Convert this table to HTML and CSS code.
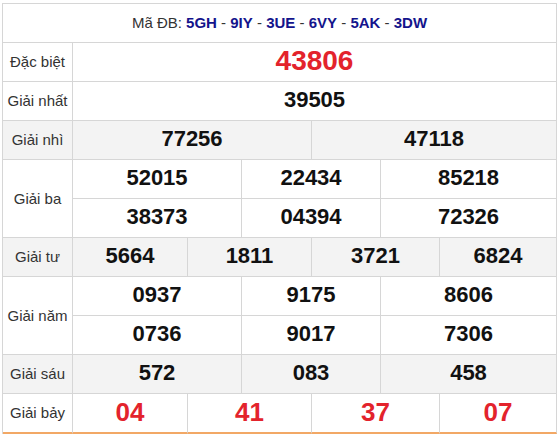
FILE: index.html
```html
<!DOCTYPE html>
<html lang="vi">
<head>
<meta charset="utf-8">
<title>Kết quả xổ số</title>
<link rel="stylesheet" href="styles.css">
</head>
<body>
<div class="board">
  <div class="cell head s7"><span>Mã ĐB: <b>5GH</b> - <b>9IY</b> - <b>3UE</b> - <b>6VY</b> - <b>5AK</b> - <b>3DW</b></span></div>

  <div class="cell label">Đặc biệt</div>
  <div class="cell num big red s6">43806</div>

  <div class="cell label">Giải nhất</div>
  <div class="cell num s6">39505</div>

  <div class="cell label gray">Giải nhì</div>
  <div class="cell num gray s3">77256</div>
  <div class="cell num gray s3">47118</div>

  <div class="cell label r2">Giải ba</div>
  <div class="cell num s2">52015</div>
  <div class="cell num s2">22434</div>
  <div class="cell num s2">85218</div>
  <div class="cell num s2">38373</div>
  <div class="cell num s2">04394</div>
  <div class="cell num s2">72326</div>

  <div class="cell label gray">Giải tư</div>
  <div class="cell num gray">5664</div>
  <div class="cell num gray s2">1811</div>
  <div class="cell num gray s2">3721</div>
  <div class="cell num gray">6824</div>

  <div class="cell label r2">Giải năm</div>
  <div class="cell num s2">0937</div>
  <div class="cell num s2">9175</div>
  <div class="cell num s2">8606</div>
  <div class="cell num s2">0736</div>
  <div class="cell num s2">9017</div>
  <div class="cell num s2">7306</div>

  <div class="cell label gray">Giải sáu</div>
  <div class="cell num gray s2">572</div>
  <div class="cell num gray s2">083</div>
  <div class="cell num gray s2">458</div>

  <div class="cell label last">Giải bảy</div>
  <div class="cell num mid red last">04</div>
  <div class="cell num mid red last s2">41</div>
  <div class="cell num mid red last s2">37</div>
  <div class="cell num mid red last">07</div>
</div>
</body>
</html>
```
FILE: styles.css
```css
html, body {
  margin: 0;
  padding: 0;
  background: #fff;
}

body {
  font-family: "Liberation Sans", Arial, sans-serif;
  color: #111;
}

.board {
  display: grid;
  grid-template-columns: 70px 115px 54px 70px 69px 59px 117px;
  grid-template-rows: repeat(10, 39px) 40px;
  margin: 3px 0 0 2px;
  width: max-content;
  border-top: 1px solid #d6d6d6;
  border-left: 1px solid #d6d6d6;
}

.cell {
  box-sizing: border-box;
  display: flex;
  align-items: center;
  justify-content: center;
  border-right: 1px solid #d6d6d6;
  border-bottom: 1px solid #d6d6d6;
  background: #fff;
  white-space: nowrap;
}

.s2 { grid-column: span 2; }
.s3 { grid-column: span 3; }
.s6 { grid-column: span 6; }
.s7 { grid-column: span 7; }
.r2 { grid-row: span 2; }

.head {
  font-size: 15px;
  color: #333;
  padding-bottom: 2px;
}

.head b {
  color: #14148c;
}

.label {
  font-size: 15px;
  color: #333;
  padding-bottom: 1px;
}

.num {
  font-size: 22px;
  font-weight: bold;
  color: #111;
  padding-bottom: 2px;
}

.num.big {
  font-size: 28px;
}

.num.mid {
  font-size: 26px;
}

.red {
  color: #e3232c;
}

.gray {
  background: #f3f3f3;
}

.last {
  border-bottom: 2px solid #f2a865;
}
```
